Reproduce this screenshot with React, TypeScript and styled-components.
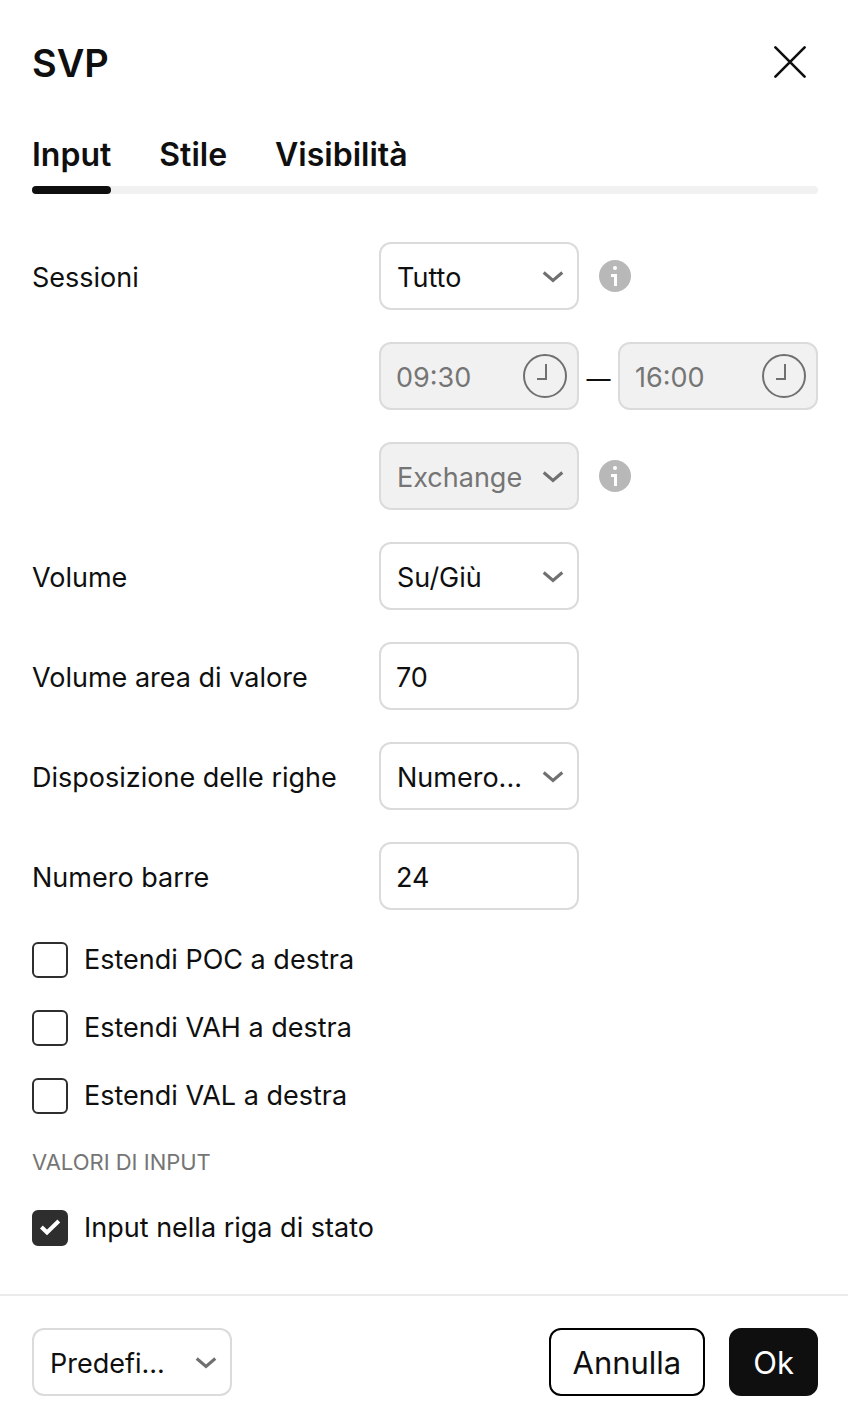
import React, { useId, useState } from "react";
import styled, { createGlobalStyle } from "styled-components";

const GlobalStyle = createGlobalStyle`
  *, *::before, *::after { box-sizing: border-box; }
  body {
    margin: 0;
    background: #fff;
    color: #0f0f0f;
    font-family: Inter, "Liberation Sans", sans-serif;
    font-size: 27px;
    line-height: 36px;
  }
  button, input, select { font: inherit; color: inherit; margin: 0; }
`;

const Dialog = styled.main`
  width: 100%;
`;

const Header = styled.header`
  display: flex;
  align-items: center;
  justify-content: space-between;
  padding: 38px 30px 0 32px;
`;

const Title = styled.h1`
  margin: 0;
  padding-top: 2px;
  font-size: 38px;
  line-height: 46px;
  font-weight: 600;
`;

const CloseButton = styled.button`
  display: grid;
  place-items: center;
  width: 56px;
  height: 48px;
  padding: 0;
  border: 0;
  background: none;
  cursor: pointer;
`;

const TabList = styled.div`
  position: relative;
  display: flex;
  gap: 48px;
  margin: 48px 30px 0 32px;

  &::before {
    content: "";
    position: absolute;
    inset: auto 0 0 0;
    height: 8px;
    border-radius: 4px;
    background: #f1f1f1;
  }
`;

const Tab = styled.button<{ $active: boolean }>`
  position: relative;
  padding: 1px 0 19px;
  border: 0;
  background: none;
  font-size: 32px;
  line-height: 40px;
  font-weight: 600;
  cursor: pointer;

  &::after {
    content: "";
    position: absolute;
    inset: auto 0 0 0;
    height: 8px;
    border-radius: 4px;
    background: ${(p) => (p.$active ? "#0f0f0f" : "transparent")};
  }
`;

const Fields = styled.div`
  display: flex;
  flex-direction: column;
  gap: 32px;
  padding: 48px 30px 48px 32px;
`;

const FieldRow = styled.div`
  display: grid;
  grid-template-columns: minmax(0, 1fr) 439px;
  align-items: center;
`;

const FieldLabel = styled.label`
  padding-top: 4px;
  white-space: nowrap;
`;

const Controls = styled.div`
  grid-column: 2;
  display: flex;
  align-items: center;
`;

const ControlBox = styled.div`
  display: grid;
  align-items: center;
  flex: none;
  width: 200px;

  > * { grid-area: 1 / 1; }
  > svg {
    justify-self: end;
    pointer-events: none;
  }
`;

const SelectInput = styled.select`
  appearance: none;
  width: 100%;
  height: 68px;
  padding: 4px 50px 0 16px;
  border: 2px solid #dbdbdb;
  border-radius: 12px;
  background: #fff;
  opacity: 1;

  &:disabled { background: #f1f1f1; color: #757575; }
`;

const TextInput = styled.input`
  width: 100%;
  height: 68px;
  padding: 2px 15px 0;
  border: 2px solid #dbdbdb;
  border-radius: 12px;
  background: #fff;

  &:disabled { background: #f1f1f1; color: #757575; }
`;

const Dash = styled.span`
  flex: 1;
  padding-top: 6px;
  font-size: 24px;
  text-align: center;
`;

const InfoButton = styled.button`
  display: grid;
  margin-left: 20px;
  padding: 0;
  border: 0;
  background: none;
`;

const CheckRow = styled.label`
  display: flex;
  align-items: center;
  gap: 16px;
  cursor: pointer;
`;

const CheckBox = styled.span`
  display: grid;
  flex: none;

  > * { grid-area: 1 / 1; }
  > svg { pointer-events: none; }
`;

const CheckInput = styled.input`
  appearance: none;
  width: 36px;
  height: 36px;
  border: 2px solid #2e2e2e;
  border-radius: 6px;
  background: #fff;

  &:checked { background: #2e2e2e; }
`;

const SectionTitle = styled.h2`
  margin: 0;
  font-size: 22px;
  line-height: 32px;
  font-weight: 400;
  color: #757575;
`;

const Footer = styled.footer`
  display: flex;
  align-items: center;
  gap: 24px;
  padding: 32px 30px 26px 32px;
  border-top: 2px solid #ebebeb;
`;

const Spacer = styled.div`
  flex: 1;
`;

const ActionButton = styled.button<{ $primary?: boolean }>`
  height: 68px;
  padding: 2px 22px 0;
  border: 2px solid ${(p) => (p.$primary ? "#0f0f0f" : "#000")};
  border-radius: 12px;
  background: ${(p) => (p.$primary ? "#0f0f0f" : "#fff")};
  color: ${(p) => (p.$primary ? "#fff" : "#0f0f0f")};
  font-size: 31px;
  line-height: 40px;
  cursor: pointer;
`;

const Chevron = () => (
  <svg width="50" height="36" viewBox="0 0 50 36" fill="none" aria-hidden="true">
    <path d="M14.7 14.5 24 22.5 33.3 14.5" stroke="#707070" strokeWidth="3" />
  </svg>
);

const Clock = () => (
  <svg width="56" height="44" viewBox="0 0 56 44" fill="none" stroke="#707070" strokeWidth="2" aria-hidden="true">
    <circle cx="22" cy="22" r="21" />
    <path d="M23 10V25H14" />
  </svg>
);

const Info = () => (
  <svg width="32" height="32" viewBox="0 0 32 32" aria-hidden="true">
    <circle cx="16" cy="16" r="16" fill="#b8b8b8" />
    <circle cx="16" cy="8" r="2" fill="#fff" />
    <path d="M12 14h6v12h-3v-9h-3z" fill="#fff" />
  </svg>
);

type SelectProps = { id?: string; value: string; label?: string; disabled?: boolean };

const Select = ({ id, value, label, disabled }: SelectProps) => (
  <ControlBox>
    <SelectInput id={id} aria-label={label} defaultValue={value} disabled={disabled}>
      <option>{value}</option>
    </SelectInput>
    <Chevron />
  </ControlBox>
);

const TimeField = ({ value, label }: { value: string; label: string }) => (
  <ControlBox>
    <TextInput type="text" defaultValue={value} aria-label={label} disabled />
    <Clock />
  </ControlBox>
);

const Field = ({ label, value, kind }: { label: string; value: string; kind: "select" | "text" }) => {
  const id = useId();
  return (
    <FieldRow>
      <FieldLabel htmlFor={id}>{label}</FieldLabel>
      <Controls>
        {kind === "select" ? (
          <Select id={id} value={value} />
        ) : (
          <ControlBox>
            <TextInput id={id} type="text" inputMode="numeric" defaultValue={value} />
          </ControlBox>
        )}
      </Controls>
    </FieldRow>
  );
};

const Check = ({ label, initial = false }: { label: string; initial?: boolean }) => {
  const [checked, setChecked] = useState(initial);
  return (
    <CheckRow>
      <CheckBox>
        <CheckInput type="checkbox" checked={checked} onChange={(e) => setChecked(e.target.checked)} />
        {checked && (
          <svg width="36" height="36" viewBox="0 0 36 36" fill="none" aria-hidden="true">
            <path d="M9.4 17 15 22.5 26.8 11" stroke="#fff" strokeWidth="4" />
          </svg>
        )}
      </CheckBox>
      {label}
    </CheckRow>
  );
};

const tabs = ["Input", "Stile", "Visibilità"];

export default function App() {
  const [active, setActive] = useState(tabs[0]);

  return (
    <Dialog>
      <GlobalStyle />
      <Header>
        <Title>SVP</Title>
        <CloseButton aria-label="Chiudi">
          <svg width="32" height="32" viewBox="0 0 32 32" fill="none" aria-hidden="true">
            <path d="M1.4 1.4 30.6 30.6M30.6 1.4 1.4 30.6" stroke="#0f0f0f" strokeWidth="2.6" strokeLinecap="round" />
          </svg>
        </CloseButton>
      </Header>

      <TabList role="tablist">
        {tabs.map((tab) => (
          <Tab key={tab} role="tab" aria-selected={tab === active} $active={tab === active} onClick={() => setActive(tab)}>
            {tab}
          </Tab>
        ))}
      </TabList>

      <Fields>
        <FieldRow>
          <FieldLabel htmlFor="sessions">Sessioni</FieldLabel>
          <Controls>
            <Select id="sessions" value="Tutto" />
            <InfoButton aria-label="Informazioni sulle sessioni">
              <Info />
            </InfoButton>
          </Controls>
        </FieldRow>
        <FieldRow>
          <Controls>
            <TimeField value="09:30" label="Ora di inizio" />
            <Dash>—</Dash>
            <TimeField value="16:00" label="Ora di fine" />
          </Controls>
        </FieldRow>
        <FieldRow>
          <Controls>
            <Select value="Exchange" label="Fuso orario" disabled />
            <InfoButton aria-label="Informazioni sul fuso orario">
              <Info />
            </InfoButton>
          </Controls>
        </FieldRow>
        <Field label="Volume" value="Su/Giù" kind="select" />
        <Field label="Volume area di valore" value="70" kind="text" />
        <Field label="Disposizione delle righe" value="Numero..." kind="select" />
        <Field label="Numero barre" value="24" kind="text" />
        <Check label="Estendi POC a destra" />
        <Check label="Estendi VAH a destra" />
        <Check label="Estendi VAL a destra" />
        <SectionTitle>VALORI DI INPUT</SectionTitle>
        <Check label="Input nella riga di stato" initial />
      </Fields>

      <Footer>
        <Select value="Predefi..." label="Predefiniti" />
        <Spacer />
        <ActionButton>Annulla</ActionButton>
        <ActionButton $primary>Ok</ActionButton>
      </Footer>
    </Dialog>
  );
}
